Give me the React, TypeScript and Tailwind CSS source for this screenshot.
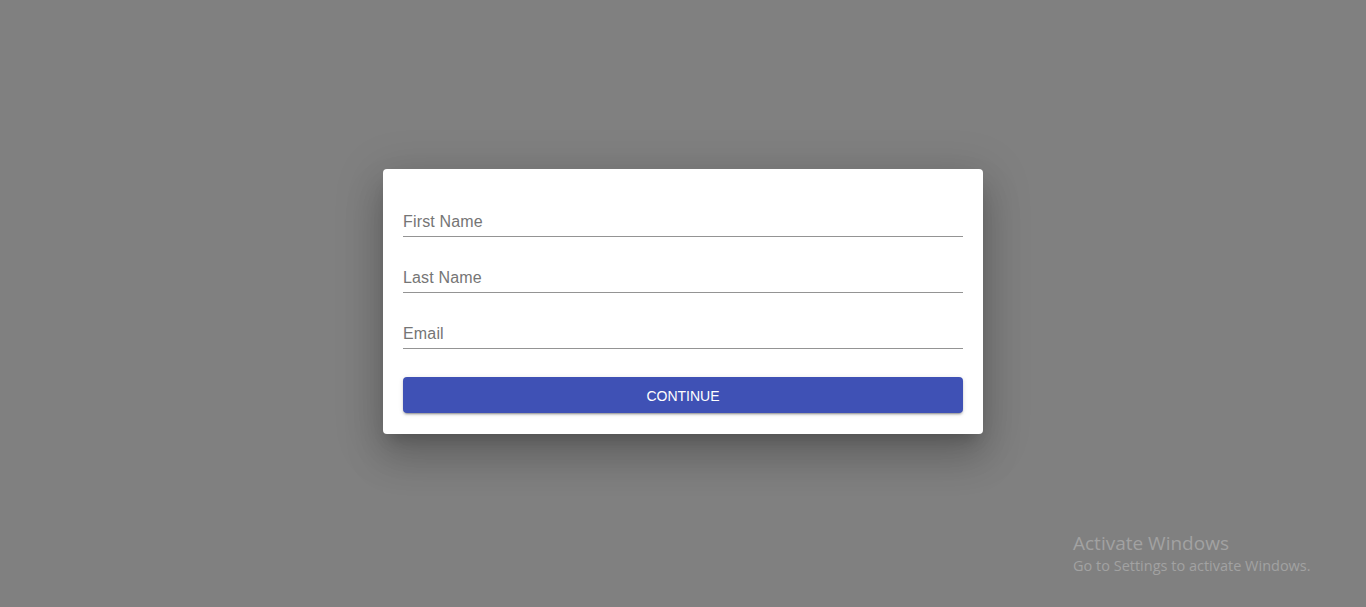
export default function App() {
  return (
    <div
      className="relative flex h-[607px] w-full items-center justify-center overflow-hidden bg-[#808080]"
      style={{ fontFamily: '"Liberation Sans", Arial, sans-serif' }}
    >
      <form className="mb-[4px] flex w-[600px] flex-col rounded-[4px] bg-white px-5 pb-[21px] pt-5 shadow-[0px_11px_15px_-7px_rgba(0,0,0,0.2),0px_24px_38px_3px_rgba(0,0,0,0.14),0px_9px_46px_8px_rgba(0,0,0,0.12)]">
        <div className="flex flex-col gap-2">
          {["First Name", "Last Name", "Email"].map((label) => (
            <input
              key={label}
              type="text"
              placeholder={label}
              className="h-12 w-full border-b border-[#949494] bg-transparent pb-[5px] pt-[23px] text-base leading-[19px] tracking-[0.01em] text-[#333] outline-none placeholder:text-[#757575]"
            />
          ))}
        </div>
        <button
          type="button"
          className="mt-7 h-9 w-full rounded-[4px] bg-[#3f51b5] pt-[2px] text-sm uppercase text-white shadow-[0px_3px_1px_-2px_rgba(0,0,0,0.2),0px_2px_2px_0px_rgba(0,0,0,0.14),0px_1px_5px_0px_rgba(0,0,0,0.12)]"
        >
          Continue
        </button>
      </form>
      <div
        className="absolute left-[1073px] top-[531px] text-[#a2a2a2]"
        style={{ fontFamily: '"Open Sans", "Noto Sans", sans-serif' }}
      >
        <div className="text-[19px] leading-[25px]">Activate Windows</div>
        <div className="text-[14.5px] leading-[20px]">Go to Settings to activate Windows.</div>
      </div>
    </div>
  );
}
